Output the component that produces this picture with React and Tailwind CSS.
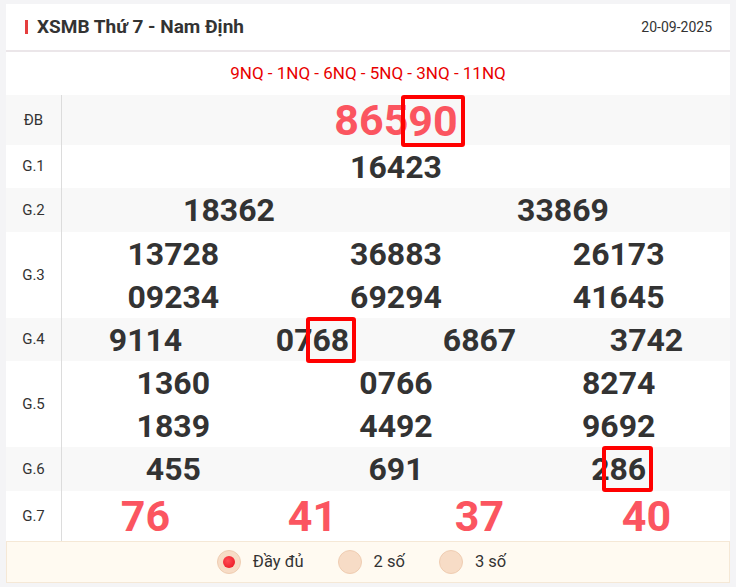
import React from "react";

const rows = [
  { label: "ĐB", cols: 1, nums: ["86590"], big: true, red: true, hl: [0], h: "h-[50px]" },
  { label: "G.1", cols: 1, nums: ["16423"] },
  { label: "G.2", cols: 2, nums: ["18362", "33869"], h: "h-[44px]" },
  { label: "G.3", cols: 3, nums: ["13728", "36883", "26173", "09234", "69294", "41645"] },
  { label: "G.4", cols: 4, nums: ["9114", "0768", "6867", "3742"], hl: [1] },
  { label: "G.5", cols: 3, nums: ["1360", "0766", "8274", "1839", "4492", "9692"] },
  { label: "G.6", cols: 3, nums: ["455", "691", "286"], hl: [2], h: "h-[44px]" },
  { label: "G.7", cols: 4, nums: ["76", "41", "37", "40"], big: true, red: true, h: "h-[50px]" },
];

const gridCols = {
  1: "grid-cols-1",
  2: "grid-cols-2",
  3: "grid-cols-3",
  4: "grid-cols-4",
};

function Num({ value, big, red, highlight, h }) {
  const head = highlight ? value.slice(0, -2) : value;
  const tail = highlight ? value.slice(-2) : null;
  return (
    <div className={`${h || "h-[43px]"} flex items-center justify-center`}>
      <div
        className={`font-bold ${big ? "text-[43px] leading-[44px]" : "text-[32px] leading-[38px]"} ${
          red ? "text-[#fb5560]" : "text-[#333]"
        }`}
      >
        {head}
        {tail && (
          // the box sits over the last two digits without pushing them apart
          <span
            className={`inline-block border-4 border-[#f00] rounded-[3px] px-[3px] mx-[-7px] ${
              big ? "leading-[44px] translate-y-[1px]" : "leading-[38px]"
            }`}
          >
            {tail}
          </span>
        )}
      </div>
    </div>
  );
}

function Radio({ label, checked }) {
  return (
    <div className="flex items-center">
      <div className="w-[24px] h-[24px] rounded-full bg-[#f7dcc6] border border-[#efcdb2] flex items-center justify-center">
        {checked && (
          <div className="w-[12px] h-[12px] rounded-full bg-[radial-gradient(circle_at_40%_40%,#ff4d55,#e8101c)]" />
        )}
      </div>
      <span className="ml-[12px] text-[16.5px] text-[#333]">{label}</span>
    </div>
  );
}

export default function App() {
  return (
    <div
      className="min-h-screen bg-[#f4f4f6] pt-[4px] pl-[6px]"
      style={{ fontFamily: "Roboto, 'Liberation Sans', sans-serif" }}
    >
      <div className="w-[724px] bg-white">
        {/* header */}
        <div className="h-[48px] flex items-center justify-between pl-[19px] pr-[18px] border-b-2 border-[#ebe6e9]">
          <div className="flex items-center">
            <div className="w-[3px] h-[14px] bg-[#e53e3e] mr-[9px]" />
            <h1 className="text-[19px] font-bold text-[#333]">XSMB Thứ 7 - Nam Định</h1>
          </div>
          <span className="text-[14px] text-[#333]">20-09-2025</span>
        </div>

        {/* codes */}
        <div className="h-[43px] flex items-center justify-center text-[17px] text-[#e80000]">
          9NQ - 1NQ - 6NQ - 5NQ - 3NQ - 11NQ
        </div>

        {/* results */}
        <div>
          {rows.map((r, i) => (
            <div key={r.label} className={`flex ${i % 2 === 0 ? "bg-[#f8f8f8]" : "bg-white"}`}>
              <div className="w-[56px] shrink-0 border-r border-[#dcdcdc] flex items-center justify-center text-[15px] text-[#333]">
                {r.label}
              </div>
              <div className={`flex-1 grid ${gridCols[r.cols]}`}>
                {r.nums.map((n, j) => (
                  <Num
                    key={j}
                    value={n}
                    big={r.big}
                    red={r.red}
                    h={r.h}
                    highlight={r.hl && r.hl.includes(j)}
                  />
                ))}
              </div>
            </div>
          ))}
        </div>

        {/* footer */}
        <div className="h-[42px] bg-[#fffaf1] border border-[#f5e8d6] flex items-center justify-center gap-[34px] pr-[13px]">
          <Radio label="Đầy đủ" checked />
          <Radio label="2 số" />
          <Radio label="3 số" />
        </div>
      </div>
    </div>
  );
}
